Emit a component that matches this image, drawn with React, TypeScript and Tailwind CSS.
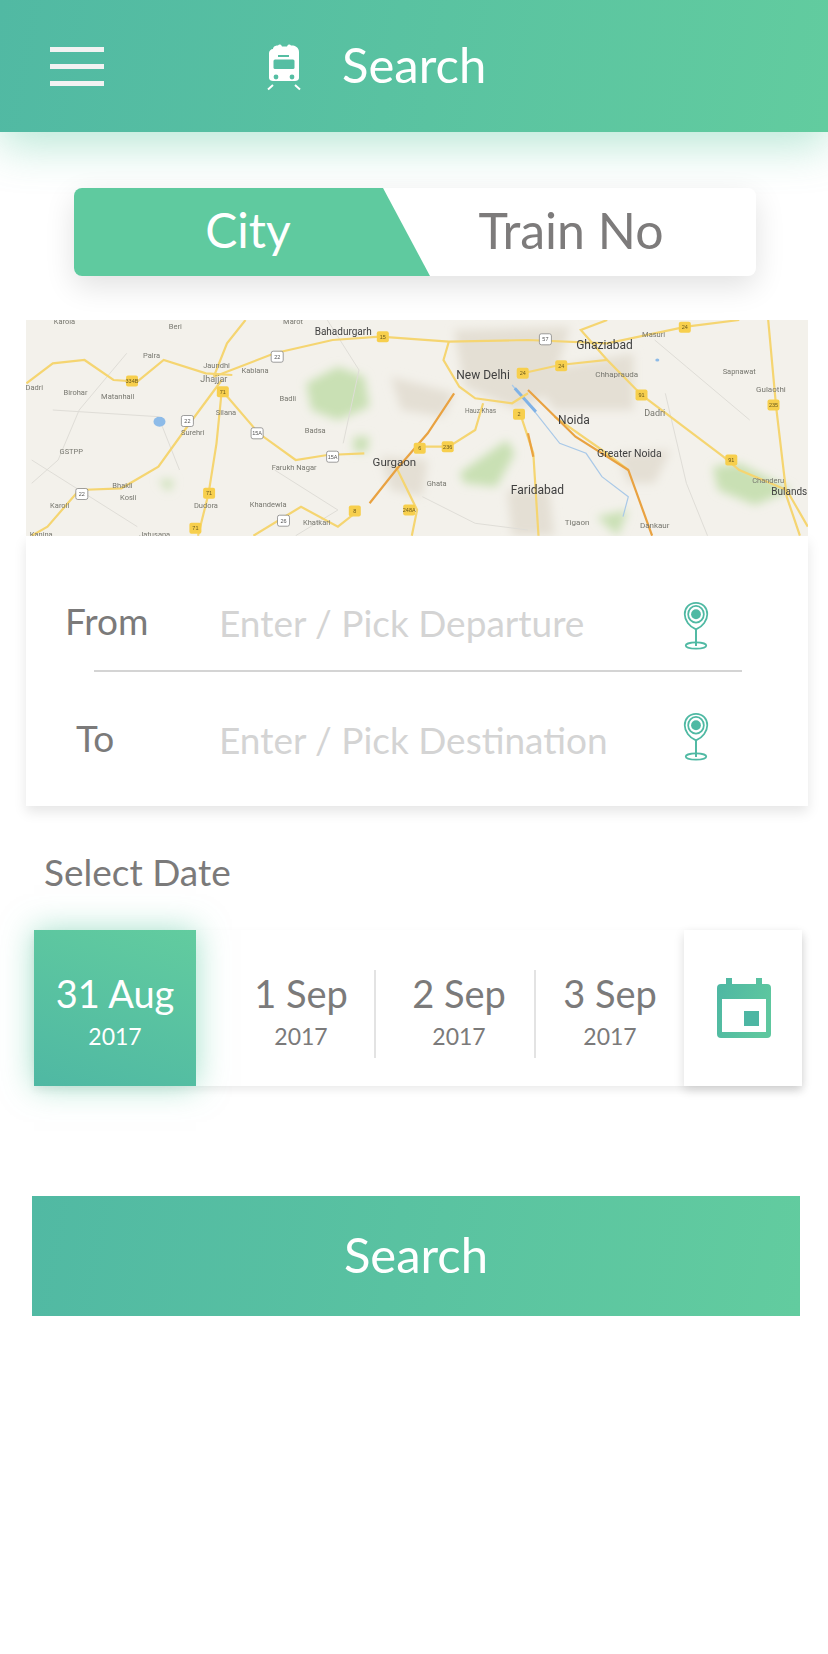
const FONT = "font-['Lato','Open_Sans',sans-serif]"

// map data is noted in reference-crop units, p() scales it down to the svg box
const px = (x: number) => +(x / 1.894 - 26).toFixed(1)
const py = (y: number) => +(y / 3 - 10).toFixed(1)
const line = (pts: number[][]) => pts.map(([x, y]) => `${px(x)},${py(y)}`).join(' ')

const YELLOW_ROADS = [
  [[50, 220], [100, 160], [160, 150], [215, 210], [260, 215], [310, 150], [390, 190], [440, 195]],
  [[405, 200], [520, 130], [630, 90], [720, 80], [850, 95], [1000, 90], [1150, 100], [1300, 50], [1400, 30]],
  [[405, 200], [430, 100], [465, 30]],
  [[420, 210], [350, 360], [300, 470], [230, 535], [150, 540], [90, 650], [60, 677]],
  [[420, 240], [410, 400], [395, 550], [375, 677]],
  [[425, 250], [490, 370], [560, 450], [620, 435], [690, 430]],
  [[850, 95], [840, 150], [870, 230], [900, 265], [970, 280], [1000, 250]],
  [[990, 190], [1060, 165], [1150, 150], [1215, 255], [1370, 440], [1400, 480], [1490, 540], [1530, 650]],
  [[1150, 150], [1100, 60], [1150, 30]],
  [[800, 410], [850, 410], [900, 360], [915, 280]],
  [[750, 470], [790, 600], [780, 677]],
  [[480, 677], [570, 590], [640, 650], [680, 600]],
  [[1455, 30], [1470, 290], [1490, 560], [1515, 677]],
  [[985, 310], [1010, 430], [1020, 677]],
  [[1190, 480], [1140, 420], [1050, 320]],
]

const ORANGE_ROADS = [
  [[860, 250], [810, 370], [750, 480], [700, 580]],
  [[1000, 240], [1090, 380], [1190, 480], [1235, 677]],
  [[1000, 370], [1010, 440]],
]

const GREY_ROADS = [
  [[240, 130], [150, 300], [110, 450], [60, 520]],
  [[620, 30], [680, 180], [650, 400]],
  [[1240, 90], [1300, 170], [1420, 330]],
  [[60, 450], [260, 650]],
  [[800, 560], [900, 640], [1000, 660]],
  [[100, 300], [300, 320], [340, 480]],
  [[520, 480], [640, 600], [560, 677]],
  [[1260, 250], [1300, 520], [1340, 677]],
]

const GREEN_AREAS = [
  [[580, 220], [640, 170], [690, 200], [700, 290], [640, 330], [590, 300]],
  [[870, 490], [960, 390], [975, 430], [940, 530], [880, 520]],
  [[1350, 470], [1400, 460], [1500, 540], [1430, 585], [1360, 540]],
  [[670, 380], [700, 380], [695, 425], [670, 425]],
  [[300, 510], [330, 510], [320, 545]],
  [[1130, 620], [1190, 600], [1170, 677]],
]

const URBAN_AREAS = [
  [[860, 60], [1080, 50], [1040, 250], [980, 300], [880, 230]],
  [[1000, 190], [1200, 130], [1200, 300], [1050, 300]],
  [[1170, 430], [1270, 420], [1240, 520], [1190, 520]],
  [[960, 540], [1040, 540], [1050, 677], [970, 677]],
  [[720, 440], [810, 450], [800, 560], [740, 540]],
  [[740, 200], [860, 250], [840, 320], [760, 300]],
]

const LABELS: [string, number, number, number][] = [
  ['Bahadurgarh', 650, 65, 10], ['New Delhi', 915, 195, 12], ['Ghaziabad', 1145, 105, 12],
  ['Noida', 1087, 330, 12], ['Greater Noida', 1192, 430, 10.5], ['Gurgaon', 747, 455, 11.5],
  ['Faridabad', 1018, 540, 12], ['Jhajjar', 405, 207, 9], ['Kablana', 483, 182, 7.5],
  ['Jaundhi', 410, 167, 7.5], ['Palra', 287, 135, 7.5], ['Beri', 332, 50, 7.5],
  ['Badli', 545, 265, 7.5], ['Silana', 428, 308, 7.5], ['Badsa', 597, 362, 7.5],
  ['Surehri', 365, 367, 7.5], ['Farukh Nagar', 557, 472, 7.5], ['Bhakli', 232, 525, 7.5],
  ['Kosli', 243, 562, 7.5], ['Karoli', 113, 585, 7.5], ['Dudora', 390, 585, 7.5],
  ['Khandewla', 508, 583, 7.5], ['Khatkari', 600, 638, 7.5], ['Ghata', 827, 520, 7.5],
  ['Tigaon', 1093, 637, 8], ['Dankaur', 1240, 645, 8], ['Dadri', 1240, 310, 9],
  ['Dadri', 65, 232, 7.5], ['Birohar', 143, 248, 7.5], ['Matanhail', 223, 260, 7.5],
  ['GSTPP', 135, 425, 7.5], ['Chhaprauda', 1168, 192, 8], ['Masuri', 1238, 72, 7.5],
  ['Sapnawat', 1400, 185, 7.5], ['Gulaothi', 1460, 237, 8], ['Chanderu', 1455, 510, 7.5],
  ['Bulands', 1495, 543, 10], ['Hauz Khas', 910, 303, 6.5], ['Jatusana', 293, 672, 7.5],
  ['Kanina', 78, 672, 7.5], ['Marot', 555, 35, 7.5], ['Karola', 122, 33, 7.5],
]

const SHIELDS: [string, number, number][] = [
  ['334B', 250, 213], ['71', 422, 245], ['15', 725, 80], ['24', 990, 190], ['24', 1063, 167],
  ['24', 1297, 52], ['91', 1215, 255], ['235', 1465, 285], ['2', 983, 313], ['6', 795, 415],
  ['236', 848, 410], ['91', 1385, 450], ['71', 396, 550], ['71', 370, 655], ['8', 672, 603],
  ['248A', 775, 600],
]

const WHITE_SHIELDS: [string, number, number][] = [
  ['22', 525, 140], ['22', 355, 333], ['15A', 487, 370], ['15A', 630, 440], ['22', 155, 552],
  ['26', 537, 632], ['57', 1033, 88],
]

function MapPreview() {
  return (
    <svg viewBox="0 0 782 216" className="block h-[216px] w-[782px] blur-[0.7px]">
      <defs>
        <filter id="soft" x="-20%" y="-20%" width="140%" height="140%">
          <feGaussianBlur stdDeviation="5" />
        </filter>
      </defs>
      <rect width="782" height="216" fill="#f3f1eb" />
      <g filter="url(#soft)">
        {URBAN_AREAS.map((a, i) => (
          <polygon key={i} points={line(a)} fill="#e4dfd4" />
        ))}
        {GREEN_AREAS.map((a, i) => (
          <polygon key={i} points={line(a)} fill="#c9e0b4" />
        ))}
      </g>
      {GREY_ROADS.map((r, i) => (
        <polyline key={i} points={line(r)} fill="none" stroke="#dfddd7" strokeWidth="1" />
      ))}
      <polyline
        points={line([[970, 225], [1010, 300], [1060, 400], [1110, 430], [1140, 500], [1190, 560], [1180, 620]])}
        fill="none"
        stroke="#a9c9e8"
        strokeWidth="1.2"
      />
      <polyline points={line([[975, 235], [1015, 305]])} fill="none" stroke="#7fb2e6" strokeWidth="3" />
      <ellipse cx={px(302)} cy={py(335)} rx="6" ry="5" fill="#8dbbe8" />
      <ellipse cx={px(1245)} cy={py(150)} rx="2" ry="1.5" fill="#8dbbe8" />
      {YELLOW_ROADS.map((r, i) => (
        <polyline key={i} points={line(r)} fill="none" stroke="#f5d571" strokeWidth="2.2" />
      ))}
      {ORANGE_ROADS.map((r, i) => (
        <polyline key={i} points={line(r)} fill="none" stroke="#e9a241" strokeWidth="2.2" />
      ))}
      {SHIELDS.map(([t, x, y], i) => (
        <g key={i}>
          <rect x={px(x) - 6} y={py(y) - 5.5} width="12" height="11" rx="2" fill="#f7cf4d" />
          <text x={px(x)} y={py(y) + 2} textAnchor="middle" fontSize="5.5" fill="#6b5a1e" fontFamily="Liberation Sans">
            {t}
          </text>
        </g>
      ))}
      {WHITE_SHIELDS.map(([t, x, y], i) => (
        <g key={i}>
          <rect x={px(x) - 6} y={py(y) - 5.5} width="12" height="11" rx="2" fill="#fff" stroke="#777" strokeWidth="0.7" />
          <text x={px(x)} y={py(y) + 2} textAnchor="middle" fontSize="5.5" fill="#555" fontFamily="Liberation Sans">
            {t}
          </text>
        </g>
      ))}
      {LABELS.map(([t, x, y, s], i) => (
        <text
          key={i}
          x={px(x)}
          y={py(y) + s * 0.35}
          textAnchor="middle"
          fontSize={s}
          fill={s >= 10 ? '#3f3f3f' : '#77776f'}
          fontFamily="Roboto"
        >
          {t}
        </text>
      ))}
    </svg>
  )
}

function TrainIcon() {
  return (
    <svg viewBox="26 23 36 50" className="h-[50px] w-[36px]">
      <path
        d="M33 29 C33 26 37 25 38 25.5 C39 24 41 24 42 26.5 L47 26.5 C48 24 50 24 51 25.5 C53 25 59 26 59 32 L59 58 C59 60 57 61 55 61 L33 61 C31 61 29 60 29 58 L29 33 C29 31 31 29 33 29 Z"
        fill="#fff"
      />
      <rect x="38" y="35" width="11" height="2" fill="#55bea3" />
      <rect x="33.5" y="39.5" width="21" height="9.5" rx="1.5" fill="#55bea3" />
      <circle cx="36" cy="57" r="2.4" fill="#55bea3" />
      <circle cx="52" cy="57" r="2.4" fill="#55bea3" />
      <path d="M33 65 L28 69.5 M55 65 L60 69.5" stroke="#fff" strokeWidth="2" fill="none" />
    </svg>
  )
}

function PinIcon() {
  return (
    <svg viewBox="0 0 26 49" className="h-[48px] w-[26px]" fill="none" stroke="#4fb9a3" strokeWidth="1.8">
      <path d="M13 1 C6 1 1.5 6 1.5 12.5 C1.5 18.5 6 25 13 28 C20 25 24.5 18.5 24.5 12.5 C24.5 6 20 1 13 1 Z" />
      <ellipse cx="13" cy="12.5" rx="8" ry="8.5" />
      <circle cx="13" cy="12.5" r="5" fill="#4fb9a3" stroke="none" />
      <path d="M13 28 L13 45" strokeWidth="2" />
      <ellipse cx="13" cy="44.5" rx="10.5" ry="3.2" />
    </svg>
  )
}

function CalendarIcon() {
  return (
    <svg viewBox="0 0 54 60" className="h-[60px] w-[54px]">
      <defs>
        <linearGradient id="cal" x1="0" y1="0" x2="1" y2="0.4">
          <stop offset="0" stopColor="#4db6a3" />
          <stop offset="1" stopColor="#5ec79f" />
        </linearGradient>
      </defs>
      <path
        fillRule="evenodd"
        d="M9 0 H15 V6 H39 V0 H45 V6 H50 Q54 6 54 10 V56 Q54 60 50 60 H4 Q0 60 0 56 V10 Q0 6 4 6 H9 Z M5 21 V54 H49 V21 Z"
        fill="url(#cal)"
      />
      <rect x="27" y="33" width="15" height="15" fill="#4db6a3" />
    </svg>
  )
}

function FormRow({ label, hint, labelPad, pinShift }: { label: string; hint: string; labelPad: string; pinShift: string }) {
  return (
    <div className="flex h-[70px] items-center">
      <span className={`-mt-[8px] w-[193px] text-[37px] leading-[44px] text-[#7b7a7a] ${labelPad}`}>{label}</span>
      <span className="-mt-[4px] flex-1 text-[37px] leading-[44px] text-[#d4d4d4]">{hint}</span>
      <span className={`mr-[99px] flex ${pinShift}`}>
        <PinIcon />
      </span>
    </div>
  )
}

function DateCell({ day, className }: { day: string; className: string }) {
  return (
    <div className={`mt-[40px] flex h-[88px] flex-col items-center pt-[5px] text-[#7b7a7a] ${className}`}>
      <span className="text-[38px] leading-[36px]">{day}</span>
      <span className="mt-[13px] text-[23px] leading-[24px]">2017</span>
    </div>
  )
}

export default function App() {
  return (
    <div className={`h-[1654px] w-[828px] overflow-hidden bg-white ${FONT}`}>
      <header className="relative flex h-[132px] items-center bg-[linear-gradient(100deg,#51b9a3,#62cc9f)] shadow-[0_14px_44px_rgba(90,200,160,0.42)]">
        <div className="ml-[50px] flex w-[54px] flex-col gap-[12px]">
          <div className="h-[5px] bg-[#f2f2f2]" />
          <div className="h-[5px] bg-[#f2f2f2]" />
          <div className="h-[5px] bg-[#f2f2f2]" />
        </div>
        <div className="ml-[162px] flex pt-[4px]">
          <TrainIcon />
        </div>
        <span className="-mt-[4px] ml-[40px] text-[49px] leading-[56px] text-white">Search</span>
      </header>

      <div className="relative ml-[74px] mr-[72px] mt-[56px] flex h-[88px] rounded-[8px] bg-white shadow-[0_10px_30px_rgba(0,0,0,0.12)]">
        <div className="flex w-[356px] items-center justify-center rounded-l-[8px] bg-[#5fca9f] pb-[4px] pr-[8px] text-[48px] text-white [clip-path:polygon(0_0,309px_0,356px_100%,0_100%)]">
          City
        </div>
        <div className="flex flex-1 items-center justify-center pb-[4px] pr-[44px] text-[50px] text-[#7d7b7b]">Train No</div>
      </div>

      <div className="ml-[26px] mr-[20px] mt-[44px] h-[216px] overflow-hidden">
        <MapPreview />
      </div>

      <div className="ml-[26px] mr-[20px] h-[270px] bg-white pt-[54px] shadow-[0_6px_12px_rgba(0,0,0,0.1)]">
        <FormRow label="From" hint="Enter / Pick Departure" labelPad="pl-[39px]" pinShift="mt-[2px]" />
        <div className="ml-[68px] mt-[10px] h-[2px] w-[648px] bg-[#d4d4d4]" />
        <div className="mt-[35px]">
          <FormRow label="To" hint="Enter / Pick Destination" labelPad="pl-[50px]" pinShift="-mt-[10px]" />
        </div>
      </div>

      <div className="ml-[44px] mt-[44px] text-[37px] leading-[44px] text-[#7b7a7a]">Select Date</div>

      <div className="relative mx-[34px] mt-[36px] flex h-[156px] w-[768px] bg-white shadow-[0_4px_8px_rgba(0,0,0,0.08)]">
        <div className="flex w-[162px] flex-col items-center bg-[linear-gradient(20deg,#4fb8a3,#62cc9f)] pt-[45px] text-white shadow-[0_0_30px_rgba(90,200,160,0.55)]">
          <span className="text-[38px] leading-[36px]">31 Aug</span>
          <span className="mt-[13px] text-[23px] leading-[24px]">2017</span>
        </div>
        <DateCell day="1 Sep" className="ml-[32px] w-[148px] border-r-2 border-[#e3e3e3]" />
        <DateCell day="2 Sep" className="ml-[8px] w-[152px] border-r-2 border-[#e3e3e3]" />
        <DateCell day="3 Sep" className="w-[148px]" />
        <div className="flex w-[118px] items-center justify-center bg-white pl-[2px] shadow-[0_4px_10px_rgba(0,0,0,0.14)]">
          <CalendarIcon />
        </div>
      </div>

      <button className="mx-[32px] mt-[110px] flex h-[120px] w-[768px] items-center justify-center bg-[linear-gradient(100deg,#51b9a3,#62cc9f)] pb-[2px] text-[49px] text-white">
        Search
      </button>
    </div>
  )
}
